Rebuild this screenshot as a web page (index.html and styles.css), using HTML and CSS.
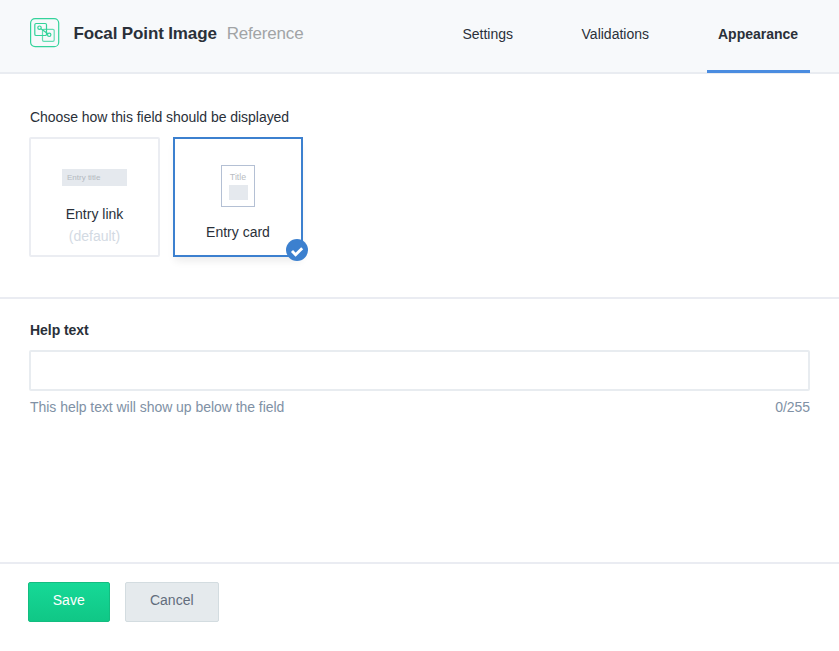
FILE: index.html
```html
<!DOCTYPE html>
<html lang="en">
<head>
<meta charset="utf-8">
<title>Focal Point Image</title>
<link rel="stylesheet" href="styles.css">
</head>
<body>
<main class="dialog">
  <header class="header">
    <svg class="field-icon" viewBox="0 0 30 30" fill="none" stroke="#34d39b">
      <rect x="0.6" y="0.6" width="28.1" height="28.1" rx="4.5" stroke-width="1.2"/>
      <rect x="4.8" y="5.5" width="11.7" height="12" rx="1.3" stroke-width="1.2"/>
      <rect x="12.5" y="11.3" width="11.7" height="12" rx="1.3" stroke-width="1.2" opacity=".75"/>
      <circle cx="9.5" cy="9.7" r="1.7" stroke-width="1.2"/>
      <circle cx="19.2" cy="16.8" r="1.7" stroke-width="1.2"/>
      <path d="M11 10.8l6.8 5" stroke-width="1.3"/>
    </svg>
    <h1 class="title">Focal Point Image</h1>
    <span class="type">Reference</span>
    <nav class="tabs">
      <a class="tab tab-settings">Settings</a>
      <a class="tab tab-validations">Validations</a>
      <a class="tab tab-active">Appearance</a>
    </nav>
  </header>
  <section class="display">
    <p class="label">Choose how this field should be displayed</p>
    <div class="options">
      <div class="option option-link">
        <div class="link-preview">Entry title</div>
        <span class="name">Entry link</span>
        <span class="default">(default)</span>
      </div>
      <div class="option selected">
        <div class="card-preview"><span>Title</span><i class="block"></i></div>
        <span class="name">Entry card</span>
        <svg class="check" viewBox="0 0 22 22"><circle cx="11" cy="11" r="11" fill="#3c80cf"/><path d="M6 12l3.6 3.700 6.600-6.400" fill="none" stroke="#fff" stroke-width="2.900"/></svg>
      </div>
    </div>
  </section>
  <section class="help">
    <label class="help-label" for="help">Help text</label>
    <input class="input" id="help" type="text">
    <div class="hint"><span class="hint-text">This help text will show up below the field</span><span class="count">0/255</span></div>
  </section>
  <footer class="footer">
    <button class="button save"><span>Save</span></button>
    <button class="button cancel"><span>Cancel</span></button>
  </footer>
</main>
</body>
</html>
```
FILE: styles.css
```css
* { box-sizing: border-box; }
body {
  margin: 0;
  background: #fff;
  color: #2a3039;
  font: 14px/20px "Liberation Sans", Arial, sans-serif;
}
.dialog { display: flex; flex-direction: column; height: 651px; overflow: hidden; }
.header {
  display: flex;
  height: 74px;
  flex: none;
  padding: 0 30px 0 29px;
  background: #f7f9fb;
  box-shadow: inset 0 -2px #e9ecf1;
}
.field-icon { width: 30px; height: 30px; margin: 18px 13.5px 0 1px; }
.title { margin: 22px 0 0; font-size: 17px; line-height: 24px; letter-spacing: -0.13px; white-space: nowrap; }
.type { margin: 22px 0 0 10px; font-size: 17px; line-height: 24px; letter-spacing: -0.2px; color: #a1a4a6; }
.tabs { display: flex; margin-left: auto; margin-right: -0.5px; gap: 47px; }
.tab { padding: 24px 10.5px 0 11.5px; height: 73px; }
.tab-settings { margin-right: -0.5px; }
.tab-active { width: 103px; font-weight: bold; border-bottom: 3px solid #4a8ce0; }
.display { height: 225px; flex: none; padding: 33px 29px 0; border-bottom: 2px solid #eaecf2; }
.label { margin: 0 0 10px; padding-left: 1px; letter-spacing: -0.04px; }
.options { display: flex; gap: 13px; }
.option {
  position: relative;
  display: flex;
  flex-direction: column;
  align-items: center;
  width: 130px;
  height: 120px;
  border: 2px solid #ebedf2;
  border-radius: 2px;
}
.option-link { width: 131px; padding-top: 30px; }
.selected { padding-top: 26px; border-color: #3c80cf; border-radius: 0; box-shadow: 0 6px 8px -2px rgba(0, 0, 0, .08); }
.link-preview { width: 65px; height: 17px; margin-bottom: 18px; padding-left: 5px; background: #e5e9ee; color: #b4b9bf; font-size: 8px; line-height: 17px; }
.default { margin-top: 2px; color: #d3dae3; }
.card-preview {
  display: flex;
  flex-direction: column;
  align-items: center;
  width: 34px;
  height: 42px;
  margin-bottom: 15px;
  border: 1px solid #b4c0d4;
  color: #b8bcc2;
  font-size: 8.8px;
  line-height: 12px;
}
.card-preview span { margin-top: 5px; }
.block { width: 19px; height: 15px; margin-top: 2px; background: #e5e9ee; }
.check { position: absolute; right: -7px; bottom: -6px; width: 22px; height: 22px; }
.help { flex: 1; padding: 21px 29px 0; }
.help-label { display: block; padding-left: 1px; font-weight: bold; letter-spacing: -0.05px; }
.input { display: block; width: 100%; height: 41px; margin: 10px 0 6px; border: 2px solid #e8ecf0; border-radius: 2px; background: #fff; outline: 0; }
.hint { display: flex; justify-content: space-between; padding-left: 1px; color: #8091a5; letter-spacing: -0.04px; }
.footer { display: flex; flex: none; height: 89px; padding: 18px 28px; gap: 15.5px; border-top: 2px solid #eaecf2; }
.button { height: 40px; padding: 0 0 4px; border: 1px solid #13bd80; border-radius: 2px; font: inherit; }
.save { width: 81.5px; color: #fff; background: linear-gradient(#16d997, #10c786); }
.cancel { width: 93.5px; color: #626d7c; background: #e5eaed; border-color: #d3dce0; }
```
